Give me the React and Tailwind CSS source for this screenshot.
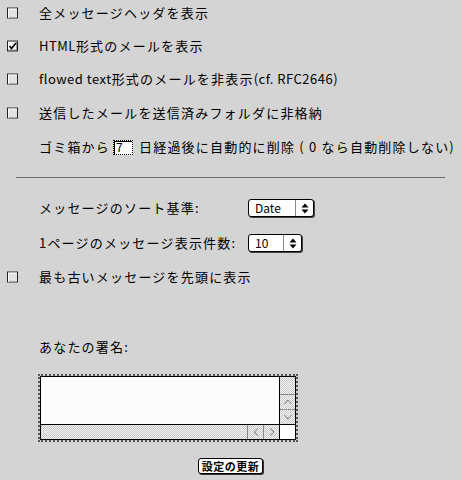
import React from "react";

const font = { fontFamily: '"Noto Sans CJK JP", "Noto Sans", sans-serif' };

function Checkbox({ checked }) {
  return (
    <div className="absolute left-[7px] top-1/2 -translate-y-1/2 w-[11px] h-[11px] border border-[#222] bg-[#f2f2f2] shadow-[inset_-1px_-1px_0_#9a9a9a,inset_1px_1px_0_#ffffff]">
      {checked ? (
        <svg width="9" height="9" viewBox="0 0 9 9" className="block">
          <path d="M1.5 4.5 L3.5 7 L8 1.5" stroke="#000" strokeWidth="1.6" fill="none" />
        </svg>
      ) : (
        <div className="w-full h-full bg-[repeating-conic-gradient(#cfcfcf_0_25%,#f4f4f4_0_50%)] bg-[length:2px_2px] shadow-[inset_1px_1px_0_#fff]" />
      )}
    </div>
  );
}

function Row({ children, cb, checked, mt }) {
  return (
    <div className={`relative flex items-center h-[20px] pl-[39px] text-[13px] tracking-[1.2px] text-black whitespace-nowrap ${mt}`}>
      {cb && <Checkbox checked={checked} />}
      {children}
    </div>
  );
}

function L({ children }) {
  return <span className="tracking-[0.5px]">{children}</span>;
}

function Select({ value, w }) {
  return (
    <div
      className={`ml-[16px] flex h-[18px] ${w} rounded-[3px] border border-black bg-white shadow-[1px_1px_0_#444] tracking-normal`}
    >
      <div className="flex-1 flex items-center pl-[6px] text-[12px] leading-none">{value}</div>
      <div className="w-[18px] border-l border-[#888] flex items-center justify-center">
        <svg width="8" height="11" viewBox="0 0 8 11">
          <path d="M4 0.5 L7.5 4.5 L0.5 4.5 Z" fill="#000" />
          <path d="M4 10.5 L7.5 6.5 L0.5 6.5 Z" fill="#000" />
        </svg>
      </div>
    </div>
  );
}

const dots = "bg-[repeating-conic-gradient(#c8c8c8_0_25%,#f6f6f6_0_50%)] bg-[length:2px_2px]";

export default function App() {
  return (
    <div className="w-[462px] h-[480px] bg-[#d4d4d4] overflow-hidden flex flex-col" style={font}>
      <Row cb mt="mt-[3px]">全メッセージヘッダを表示</Row>
      <Row cb checked mt="mt-[13px]"><L>HTML</L>形式のメールを表示</Row>
      <Row cb mt="mt-[13px]"><L>flowed text</L>形式のメールを非表示<L>(cf. RFC2646)</L></Row>
      <Row cb mt="mt-[14px]">送信したメールを送信済みフォルダに非格納</Row>
      <Row mt="mt-[14px]">
        <span>ゴミ箱から</span>
        <div className="ml-[3px] mr-[6px] w-[20px] h-[15px] border border-dotted border-black bg-white flex items-center pl-[2px] text-[12px] tracking-normal shadow-[inset_1px_1px_0_#000]">
          7
        </div>
        <span>日経過後に自動的に削除 ( 0 なら自動削除しない)</span>
      </Row>
      <div className="mt-[20px] ml-[16px] w-[429px] h-px bg-[#6a6a6a]" />
      <Row mt="mt-[20px]">
        <span className="w-[193px]">メッセージのソート基準:</span>
        <Select value="Date" w="w-[66px]" />
      </Row>
      <Row mt="mt-[15px]">
        <span className="w-[193px]">1ページのメッセージ表示件数:</span>
        <Select value="10" w="w-[54px]" />
      </Row>
      <Row cb mt="mt-[14px]">最も古いメッセージを先頭に表示</Row>
      <Row mt="mt-[50px]">あなたの署名:</Row>
      <div className="mt-[17px] ml-[38px] w-[260px] h-[68px] border-2 border-dotted border-[#555] flex">
        <div className="flex-1 flex flex-col">
          <div className="flex-1 bg-[#fcfcfc] border-t border-l border-black" />
          <div className={`h-[16px] flex border border-black border-r-0 ${dots}`}>
            <div className="flex-1" />
            <div className="w-[16px] border-l border-[#888] flex items-center justify-center">
              <svg width="6" height="8" viewBox="0 0 6 8"><path d="M5 0.5 L1 4 L5 7.5" stroke="#777" fill="none" /></svg>
            </div>
            <div className="w-[16px] border-l border-[#888] flex items-center justify-center">
              <svg width="6" height="8" viewBox="0 0 6 8"><path d="M1 0.5 L5 4 L1 7.5" stroke="#777" fill="none" /></svg>
            </div>
          </div>
        </div>
        <div className="w-[17px] flex flex-col">
          <div className={`flex-1 flex flex-col border border-black border-b-0 ${dots}`}>
            <div className="flex-1" />
            <div className="h-[15px] border-t border-[#888] flex items-center justify-center">
              <svg width="8" height="6" viewBox="0 0 8 6"><path d="M0.5 5 L4 1 L7.5 5" stroke="#777" fill="none" /></svg>
            </div>
            <div className="h-[15px] border-t border-dashed border-[#888] flex items-center justify-center">
              <svg width="8" height="6" viewBox="0 0 8 6"><path d="M0.5 1 L4 5 L7.5 1" stroke="#777" fill="none" /></svg>
            </div>
          </div>
          <div className="h-[16px] bg-white border border-black" />
        </div>
      </div>
      <div className="mt-[16px] flex justify-center">
        <button className="ml-[-1px] h-[16px] px-[3px] rounded-[3px] border border-black bg-white shadow-[1px_1px_0_#333] text-[11px] font-bold leading-none tracking-[0.5px]" style={font}>
          設定の更新
        </button>
      </div>
    </div>
  );
}
